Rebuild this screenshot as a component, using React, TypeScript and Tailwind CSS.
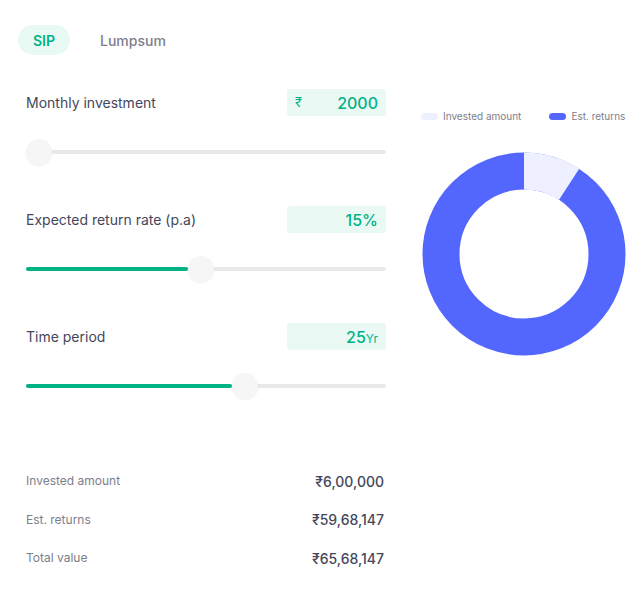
import type { ReactNode } from 'react';

const INVESTED = 600000;
const TOTAL = 6568147;

function Field({
  label,
  value,
  fill,
  children,
}: {
  label: string;
  value: ReactNode;
  fill: number;
  children?: ReactNode;
}) {
  return (
    <div>
      <div className="flex h-[27px] items-center justify-between">
        <span className="text-[14px] text-[#44475b]">{label}</span>
        <div className="flex h-[27px] w-[99px] items-center justify-between rounded-[2px] bg-[#ebf9f5] px-[8px] text-[16px] font-medium text-[#00b386]">
          <span className="text-[13px] font-normal">{children}</span>
          {value}
        </div>
      </div>
      <div className="relative mt-[23px] h-[26px]">
        <div className="absolute top-[11px] left-0 h-[4px] w-full rounded-full bg-[#e9e9eb]" />
        <div
          className="absolute top-[11px] left-0 h-[4px] rounded-full bg-[#00b386]"
          style={{ width: `${fill}px` }}
        />
        <div
          className="absolute top-0 h-[26px] w-[26px] -translate-x-1/2 rounded-full bg-[#f6f6f6] shadow-[0_1px_2px_rgba(0,0,0,0.06)]"
          style={{ left: `${fill + 13}px` }}
        />
      </div>
    </div>
  );
}

function Row({ label, value }: { label: string; value: string }) {
  return (
    <div className="flex h-[20px] items-center justify-between">
      <span className="text-[12px] text-[#7c7e8c]">{label}</span>
      <span className="text-[14px] font-medium text-[#44475b]">{value}</span>
    </div>
  );
}

function Donut() {
  const cx = 102;
  const cy = 102;
  const r = 83;
  const c = 2 * Math.PI * r;
  const part = (INVESTED / TOTAL) * c;
  return (
    <svg width="204" height="204" viewBox="0 0 204 204">
      <circle cx={cx} cy={cy} r={r} fill="none" stroke="#5367ff" strokeWidth="37" />
      <circle
        cx={cx}
        cy={cy}
        r={r}
        fill="none"
        stroke="#eef0ff"
        strokeWidth="37"
        strokeDasharray={`${part} ${c}`}
        transform={`rotate(-90 ${cx} ${cy})`}
      />
    </svg>
  );
}

export default function App() {
  return (
    <div className="h-[602px] w-[640px] bg-white font-['Inter',sans-serif]">
      <div className="flex gap-[30px] pt-[25px] pl-[18px]">
        <div className="flex h-[30px] w-[52px] items-center justify-center rounded-full bg-[#e9faf5] text-[14px] font-semibold text-[#00b386]">
          SIP
        </div>
        <div className="flex h-[30px] items-center text-[14px] font-medium text-[#7c7e8c]">
          Lumpsum
        </div>
      </div>

      <div className="flex">
        <div className="ml-[26px] w-[360px]">
          <div className="mt-[34px] flex flex-col gap-[41px]">
            <Field label="Monthly investment" value="2000" fill={0}>
              ₹
            </Field>
            <Field label="Expected return rate (p.a)" value="15%" fill={162} />
            <Field
              label="Time period"
              value={
                <span>
                  25<span className="text-[12px] font-normal">Yr</span>
                </span>
              }
              fill={206}
            />
          </div>

          <div className="mt-[72px] flex flex-col gap-[18.5px] pr-[2px]">
            <Row label="Invested amount" value="₹6,00,000" />
            <Row label="Est. returns" value="₹59,68,147" />
            <Row label="Total value" value="₹65,68,147" />
          </div>
        </div>

        <div className="ml-[35px] flex flex-col pt-[54px]">
          <div className="flex items-center gap-[5px] text-[10px] text-[#7c7e8c]">
            <span className="h-[7px] w-[17px] rounded-full bg-[#eef0ff]" />
            <span>Invested amount</span>
            <span className="ml-[23px] h-[7px] w-[17px] rounded-full bg-[#5367ff]" />
            <span>Est. returns</span>
          </div>
          <div className="mt-[28px] ml-[1px]">
            <Donut />
          </div>
        </div>
      </div>
    </div>
  );
}
